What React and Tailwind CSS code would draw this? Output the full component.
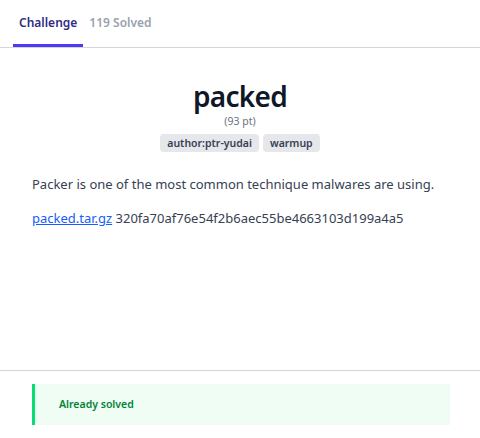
import React from 'react';

const Tag = ({ children }) => (
  <span className="rounded bg-gray-200 px-[7px] py-[2px] text-[10.5px] font-semibold leading-[14px] text-gray-700">{children}</span>
);

const App = () => {
  return (
    <div className="flex h-[438px] w-[480px] flex-col bg-white font-['Noto_Sans',sans-serif] text-gray-700">
      {/* Tabs */}
      <div className="flex h-[48px] shrink-0 items-end border-b border-gray-300 pl-[13px]">
        <div className="border-b-[3px] border-indigo-600 px-[6px] pb-[12px] text-[12px] font-semibold text-indigo-900">
          Challenge
        </div>
        <div className="px-[6px] pb-[15px] text-[12px] font-semibold text-gray-400">119 Solved</div>
      </div>

      {/* Body */}
      <div className="flex-1 px-[32px] pt-[30px]">
        <div className="flex flex-col items-center">
          <h1 className="text-[28px] font-semibold leading-[36px] tracking-tight text-gray-900">packed</h1>
          <div className="text-[10.5px] leading-[14px] text-gray-500">(93 pt)</div>
          <div className="mt-[6px] flex gap-[4px]">
            <Tag>author:ptr-yudai</Tag>
            <Tag>warmup</Tag>
          </div>
        </div>
        <p className="mt-[22px] text-[13px] leading-[20px]">
          Packer is one of the most common technique malwares are using.
        </p>
        <p className="mt-[14px] text-[13px] leading-[20px]">
          <a href="#" className="text-blue-600 underline">packed.tar.gz</a> 320fa70af76e54f2b6aec55be4663103d199a4a5
        </p>
      </div>

      {/* Footer */}
      <div className="h-[68px] shrink-0 border-t border-gray-300 px-[32px] pt-[13px]">
        <div className="flex h-[41px] w-[418px] items-center border-l-[3px] border-green-400 bg-green-50 pl-[24px] text-[10.5px] font-semibold text-green-700">
          Already solved
        </div>
      </div>
    </div>
  );
};

export default App;
